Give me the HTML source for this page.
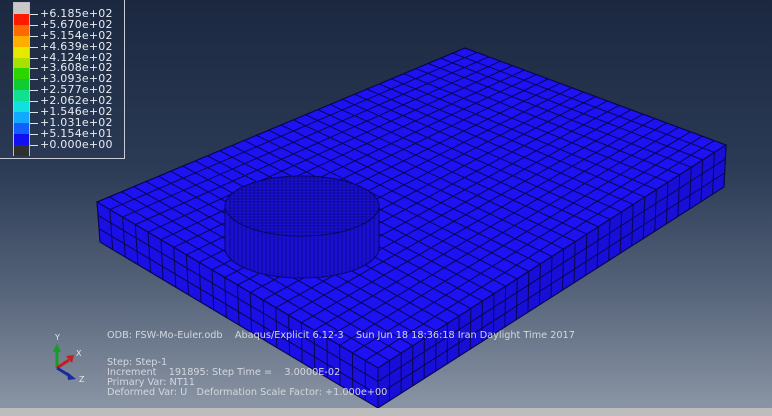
<!DOCTYPE html>
<html><head><meta charset="utf-8"><style>
html,body{margin:0;padding:0;width:772px;height:416px;overflow:hidden}
body{background:linear-gradient(#1b2840 0%,#2b3a55 40%,#56647a 70%,#8893a3 97%);position:relative;font-family:"DejaVu Sans","Liberation Sans",sans-serif}
#strip{position:absolute;left:0;top:408px;width:772px;height:8px;background:#bdbdbd}
#leg{position:absolute;left:0;top:0;width:124px;height:158px;border-right:1px solid #c8ccd4;border-bottom:1px solid #c8ccd4}
#bar{position:absolute;left:13px;top:2px;width:17px;height:154px;border:1px solid #b8bcc4;box-sizing:border-box}
.c{position:absolute;left:14px;width:15px;height:11px}
.l{position:absolute;left:40px;font-size:11px;color:#e8ecf2;line-height:11px;letter-spacing:0.2px}
.t{position:absolute;left:30px;width:8px;height:1px;background:#dfe3ea}
.info{position:absolute;color:#d4d8de;font-size:9.7px;line-height:10px;white-space:pre}
</style></head><body>
<div id="leg"></div>
<svg id="s" width="772" height="416" style="position:absolute;left:0;top:0"></svg>
<div class="info" style="left:107px;top:331px">ODB: FSW-Mo-Euler.odb    Abaqus/Explicit 6.12-3    Sun Jun 18 18:36:18 Iran Daylight Time 2017</div>
<div class="info" style="left:107px;top:358px">Step: Step-1
Increment    191895: Step Time =    3.0000E-02
Primary Var: NT11
Deformed Var: U   Deformation Scale Factor: +1.000e+00</div>
<svg width="772" height="416" style="position:absolute;left:0;top:0">
<line x1="57" y1="368" x2="57" y2="350" stroke="#1a9a2a" stroke-width="3"/><polygon points="53,352 61,352 57,343" fill="#1a9a2a"/>
<line x1="57" y1="368" x2="69" y2="360" stroke="#c02020" stroke-width="3"/><polygon points="66,356 72,363 74,355" fill="#c02020"/>
<line x1="57" y1="368" x2="70" y2="376" stroke="#1a2aa0" stroke-width="3"/><polygon points="67,372 68,380 76,379" fill="#1a2aa0"/>
<text x="55" y="340" fill="#e8e8e8" font-size="8" font-family="DejaVu Sans">Y</text>
<text x="76" y="356" fill="#e8e8e8" font-size="8" font-family="DejaVu Sans">X</text>
<text x="79" y="382" fill="#e8e8e8" font-size="8" font-family="DejaVu Sans">Z</text>
</svg>
<div id="strip"></div>
<script>
var cols=["#c8c8c8","#ff1a00","#ff6a00","#ffae00","#e8e800","#a8e000","#2ed400","#10cc30","#10e090","#10e0e0","#10aaff","#1060ff","#1010f0","#303030"];
var labs=["+6.185e+02","+5.670e+02","+5.154e+02","+4.639e+02","+4.124e+02","+3.608e+02","+3.093e+02","+2.577e+02","+2.062e+02","+1.546e+02","+1.031e+02","+5.154e+01","+0.000e+00"];
var L=document.getElementById('leg'),h='<div id="bar"></div>';
for(var i=0;i<14;i++){h+='<div class="c" style="top:'+(3+i*10.9)+'px;background:'+cols[i]+'"></div>';}
for(var i=0;i<13;i++){var y=3+(i+1)*10.9;h+='<div class="t" style="top:'+y.toFixed(1)+'px"></div><div class="l" style="top:'+(y-6).toFixed(1)+'px">'+labs[i]+'</div>';}
L.innerHTML=h;
var S=document.getElementById('s'),o='';
function P(p){return p.map(function(q){return q[0].toFixed(1)+','+q[1].toFixed(1)}).join(' ')}
function bl(a,b,c,d,u,v){return[(1-u)*(1-v)*a[0]+u*(1-v)*b[0]+u*v*c[0]+(1-u)*v*d[0],(1-u)*(1-v)*a[1]+u*(1-v)*b[1]+u*v*c[1]+(1-u)*v*d[1]]}
function face(a,b,c,d,nu,nv,fill){o+='<polygon points="'+P([a,b,c,d])+'" fill="'+fill+'"/>';
for(var i=0;i<=nu;i++){var p=bl(a,b,c,d,i/nu,0),q=bl(a,b,c,d,i/nu,1);o+='<line x1="'+p[0]+'" y1="'+p[1]+'" x2="'+q[0]+'" y2="'+q[1]+'"/>';}
for(var j=0;j<=nv;j++){var p=bl(a,b,c,d,0,j/nv),q=bl(a,b,c,d,1,j/nv);o+='<line x1="'+p[0]+'" y1="'+p[1]+'" x2="'+q[0]+'" y2="'+q[1]+'"/>';}}
var Lt=[97,202],B=[465,48],R=[726,145],F=[378,368],Lb=[100,242],Fb=[378,408],Rb=[724,187];
o+='<g stroke="#0a0650" stroke-width="1">';
face(Lt,F,R,B,22,30,"#1c12f2");
face(Lt,F,Fb,Lb,22,3,"#1a10e6");
face(F,R,Rb,Fb,30,3,"#170ed8");
o+='</g>';
o+='<path d="M225,206 L225,248 A77,30 0 0 0 379,248 L379,206 Z" fill="#1a10d4" stroke="#0a0660" stroke-width="1"/>';
o+='<ellipse cx="302" cy="206" rx="77" ry="30" fill="#1a10dc" stroke="#0a0660" stroke-width="1"/>';
o+='<g stroke="#08055a" stroke-width="0.6">';
for(var k=-72;k<=72;k+=4){var dy=30*Math.sqrt(1-(k/77)*(k/77));o+='<line x1="'+(302+k)+'" y1="'+(206-dy)+'" x2="'+(302+k)+'" y2="'+(206+dy)+'"/>';o+='<line x1="'+(302+k)+'" y1="'+(206+dy)+'" x2="'+(302+k)+'" y2="'+(248+dy)+'"/>';}
for(var k=-28;k<=28;k+=3){var dx=77*Math.sqrt(1-(k/30)*(k/30));o+='<line x1="'+(302-dx)+'" y1="'+(206+k)+'" x2="'+(302+dx)+'" y2="'+(206+k)+'"/>';}
o+='</g>';
S.innerHTML=o;
</script>
</body></html>
